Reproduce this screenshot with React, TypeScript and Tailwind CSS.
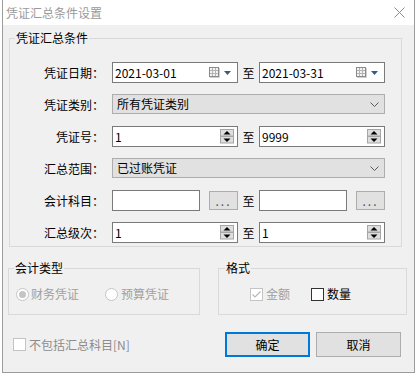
import React from "react";

function CalIcon() {
  return (
    <div className="flex items-center gap-[4px]">
      <svg width="11" height="11" viewBox="0 0 11 11">
        <rect x="0.5" y="0.5" width="9" height="9" fill="#f2f2f2" stroke="#8a8a8a" />
        <path d="M3.5 1v8M6.5 1v8M1 3.5h8M1 6.5h8" stroke="#b4b4b4" />
        <path d="M1 10.5h9.5V1" stroke="#cfcfcf" fill="none" />
      </svg>
      <svg width="7" height="4" viewBox="0 0 7 4">
        <path d="M0 0h7L3.5 4z" fill="#3a5a86" />
      </svg>
    </div>
  );
}

function Spinner() {
  return (
    <svg width="14" height="15" viewBox="0 0 14 15">
      <rect x="0.5" y="0.5" width="13" height="6.5" fill="#dedede" stroke="#a6a6a6" />
      <rect x="0.5" y="7.5" width="13" height="6.5" fill="#dedede" stroke="#a6a6a6" />
      <path d="M3.5 5.5L7 2l3.5 3.5z" fill="#000" />
      <path d="M3.5 9.5L7 13l3.5-3.5z" fill="#000" />
    </svg>
  );
}

function Chevron() {
  return (
    <svg width="9" height="5" viewBox="0 0 9 5">
      <path d="M0.5 0.5L4.5 4.5L8.5 0.5" stroke="#5a5a5a" fill="none" />
    </svg>
  );
}

function Label({ children }: { children: React.ReactNode }) {
  return <div className="w-[94px] text-right mr-[8px] leading-[21px]">{children}</div>;
}

function To() {
  return <div className="w-[21px] text-center leading-[21px]">至</div>;
}

function DateBox({ value }: { value: string }) {
  return (
    <div className="flex h-[21px] w-[126px] items-center border border-[#7a7a7a] bg-white pl-[2px] pr-[6px]">
      <span className="flex-1 leading-[19px]">{value}</span>
      <CalIcon />
    </div>
  );
}

function SpinBox({ value }: { value: string }) {
  return (
    <div className="flex h-[21px] w-[126px] items-center border border-[#7a7a7a] bg-white pl-[2px] pr-[3px]">
      <span className="flex-1 leading-[19px]">{value}</span>
      <Spinner />
    </div>
  );
}

function Combo({ value }: { value: string }) {
  return (
    <div className="flex h-[20px] w-[273px] items-center border border-[#adadad] bg-[#e1e1e1] pl-[4px] pr-[5px]">
      <span className="flex-1 leading-[18px]">{value}</span>
      <Chevron />
    </div>
  );
}

function DotsButton() {
  return (
    <div className="ml-[9px] flex h-[19px] w-[29px] items-center justify-center border border-[#adadad] bg-[#e1e1e1] text-[#555] tracking-[2px] leading-[17px]">
      ...
    </div>
  );
}

export default function App() {
  return (
    <div className="h-[377px] w-[417px] bg-white font-['Noto_Sans_CJK_SC',sans-serif] text-[12px] text-black">
      <div className="ml-[2px] flex h-[373px] w-[413px] flex-col border-x border-b border-[#9c9c9c]">
        {/* title bar */}
        <div className="flex h-[25px] items-center justify-between bg-white pl-[3px] pr-[9px]">
          <span className="text-[#9a9a9a] leading-[16px]">凭证汇总条件设置</span>
          <svg width="11" height="11" viewBox="0 0 11 11">
            <path d="M0.5 0.5L10.5 10.5M10.5 0.5L0.5 10.5" stroke="#8a8a8a" strokeWidth="1" />
          </svg>
        </div>
        {/* body */}
        <div className="flex flex-1 flex-col bg-[#f0f0f0]">
          <fieldset className="ml-[6px] mt-[5px] h-[217px] w-[393px] border border-[#d9d9d9] pt-[16px]">
            <legend className="ml-[5px] px-[1px] leading-[16px]">凭证汇总条件</legend>
            <div className="flex flex-col gap-[11px]">
              <div className="flex h-[21px] items-start">
                <Label>凭证日期：</Label>
                <DateBox value="2021-03-01" />
                <To />
                <DateBox value="2021-03-31" />
              </div>
              <div className="flex h-[21px] items-start">
                <Label>凭证类别：</Label>
                <Combo value="所有凭证类别" />
              </div>
              <div className="flex h-[21px] items-start">
                <Label>凭证号：</Label>
                <SpinBox value="1" />
                <To />
                <SpinBox value="9999" />
              </div>
              <div className="flex h-[21px] items-start">
                <Label>汇总范围：</Label>
                <Combo value="已过账凭证" />
              </div>
              <div className="flex h-[21px] items-center">
                <Label>会计科目：</Label>
                <div className="h-[21px] w-[88px] border border-[#7a7a7a] bg-white" />
                <DotsButton />
                <To />
                <div className="h-[21px] w-[88px] border border-[#7a7a7a] bg-white" />
                <DotsButton />
              </div>
              <div className="flex h-[21px] items-start">
                <Label>汇总级次：</Label>
                <SpinBox value="1" />
                <To />
                <SpinBox value="1" />
              </div>
            </div>
          </fieldset>

          <div className="mt-[13px] flex">
            <fieldset className="ml-[5px] h-[55px] w-[192px] border border-[#d9d9d9] pt-[10px]">
              <legend className="ml-[5px] px-[1px] leading-[16px]">会计类型</legend>
              <div className="flex h-[16px] items-center pl-[7px] text-[#a0a0a0]">
                <svg width="13" height="13" viewBox="0 0 13 13">
                  <circle cx="6.5" cy="6.5" r="6" fill="#fff" stroke="#c4c4c4" />
                  <circle cx="6.5" cy="6.5" r="3.5" fill="#c4c4c4" />
                </svg>
                <span className="ml-[2px]">财务凭证</span>
                <svg className="ml-[26px]" width="13" height="13" viewBox="0 0 13 13">
                  <circle cx="6.5" cy="6.5" r="6" fill="#fff" stroke="#c4c4c4" />
                </svg>
                <span className="ml-[3px]">预算凭证</span>
              </div>
            </fieldset>
            <fieldset className="ml-[18px] h-[55px] w-[189px] border border-[#d9d9d9] pt-[10px]">
              <legend className="ml-[6px] px-[1px] leading-[16px]">格式</legend>
              <div className="flex h-[16px] items-center pl-[31px]">
                <svg width="13" height="13" viewBox="0 0 13 13">
                  <rect x="0.5" y="0.5" width="12" height="12" fill="#fff" stroke="#c4c4c4" />
                  <path d="M2.5 6.5l2.5 2.5 5.5-5.5" stroke="#b8b8b8" strokeWidth="1.2" fill="none" />
                </svg>
                <span className="ml-[3px] text-[#a0a0a0]">金额</span>
                <svg className="ml-[21px]" width="13" height="13" viewBox="0 0 13 13">
                  <rect x="0.5" y="0.5" width="12" height="12" fill="#fff" stroke="#333" />
                </svg>
                <span className="ml-[3px]">数量</span>
              </div>
            </fieldset>
          </div>

          <div className="mt-[17px] flex items-center">
            <svg className="ml-[10px]" width="13" height="13" viewBox="0 0 13 13">
              <rect x="0.5" y="0.5" width="12" height="12" fill="#fff" stroke="#c4c4c4" />
            </svg>
            <span className="ml-[3px] text-[#8c8c8c]">不包括汇总科目[N]</span>
            <div className="ml-auto flex gap-[6px] pr-[13px]">
              <div className="flex h-[25px] w-[85px] items-center justify-center border-2 border-[#0078d7] bg-[#e1e1e1]">确定</div>
              <div className="flex h-[25px] w-[85px] items-center justify-center border border-[#adadad] bg-[#e1e1e1]">取消</div>
            </div>
          </div>
        </div>
      </div>
    </div>
  );
}
